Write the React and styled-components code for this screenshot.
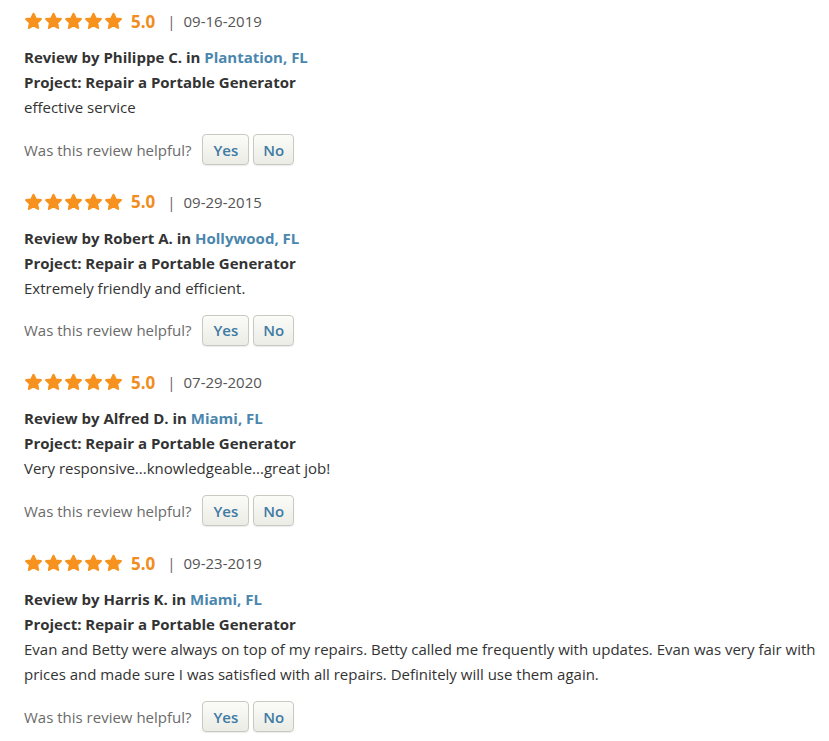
import React from "react";
import styled, { createGlobalStyle } from "styled-components";

const Global = createGlobalStyle`
  html, body { margin: 0; padding: 0; background: #fff; }
  body { font-family: "Open Sans", "Noto Sans", sans-serif; color: #333; }
`;

const Page = styled.div`
  padding: 9px 12px 0 24px;
`;

const Review = styled.section`
  margin-bottom: 24.7px;
`;

const Header = styled.div`
  display: flex;
  align-items: center;
  height: 24px;
  margin-bottom: 12px;
`;

const Stars = styled.div`
  display: flex;
  gap: 1px;
  margin-right: 8px;
`;

const Score = styled.span`
  font-size: 17px;
  font-weight: 700;
  color: #f18d1f;
`;

const Sep = styled.span`
  font-size: 15px;
  color: #666;
  margin: 0 8px 0 12px;
`;

const DateText = styled.span`
  font-size: 15px;
  color: #555;
`;

const Line = styled.div`
  font-size: 15px;
  line-height: 25px;
  font-weight: ${(p) => (p.$bold ? 700 : 400)};
  color: #333;
`;

const Place = styled.a`
  color: #4a86ad;
  text-decoration: none;
`;

const Helpful = styled.div`
  display: flex;
  align-items: center;
  margin-top: 14px;
`;

const HelpLabel = styled.span`
  font-size: 15px;
  color: #6b6b6b;
  margin-right: 11px;
`;

const Btn = styled.button`
  font-family: "Open Sans", "Noto Sans", sans-serif;
  font-size: 15px;
  font-weight: 600;
  color: #3f7ba3;
  height: 31px;
  padding: 0 ${(p) => p.$pad}px;
  margin-right: 4px;
  border: 1px solid #c9c9c2;
  border-radius: 4px;
  background: linear-gradient(#fbfbf8, #ecece6);
  box-shadow: 0 1px 1px rgba(0, 0, 0, 0.08);
  cursor: pointer;
`;

const Star = () => (
  <svg width="19" height="18" viewBox="0 0 24 23">
    <path
      d="M12 2.2l2.9 6.1 6.6.8-4.9 4.6 1.3 6.6L12 17l-5.9 3.3 1.3-6.6-4.9-4.6 6.6-.8z"
      fill="#f7921e"
      stroke="#f7921e"
      strokeWidth="2.6"
      strokeLinejoin="round"
    />
  </svg>
);

const reviews = [
  {
    date: "09-16-2019",
    name: "Philippe C.",
    place: "Plantation, FL",
    text: "effective service",
  },
  {
    date: "09-29-2015",
    name: "Robert A.",
    place: "Hollywood, FL",
    text: "Extremely friendly and efficient.",
  },
  {
    date: "07-29-2020",
    name: "Alfred D.",
    place: "Miami, FL",
    text: "Very responsive...knowledgeable...great job!",
  },
  {
    date: "09-23-2019",
    name: "Harris K.",
    place: "Miami, FL",
    text: "Evan and Betty were always on top of my repairs. Betty called me frequently with updates. Evan was very fair with prices and made sure I was satisfied with all repairs. Definitely will use them again.",
  },
];

export default function App() {
  return (
    <Page>
      <Global />
      {reviews.map((r, i) => (
        <Review key={i}>
          <Header>
            <Stars>
              {[0, 1, 2, 3, 4].map((s) => (
                <Star key={s} />
              ))}
            </Stars>
            <Score>5.0</Score>
            <Sep>|</Sep>
            <DateText>{r.date}</DateText>
          </Header>
          <Line $bold>
            Review by {r.name} in <Place href="#">{r.place}</Place>
          </Line>
          <Line $bold>Project: Repair a Portable Generator</Line>
          <Line>{r.text}</Line>
          <Helpful>
            <HelpLabel>Was this review helpful?</HelpLabel>
            <Btn $pad={10}>Yes</Btn>
            <Btn $pad={9}>No</Btn>
          </Helpful>
        </Review>
      ))}
    </Page>
  );
}
